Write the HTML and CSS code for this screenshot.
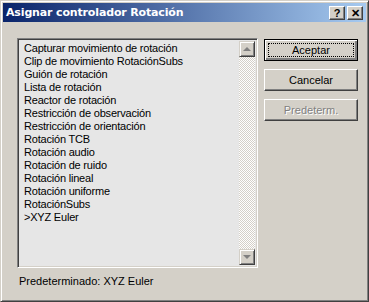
FILE: index.html
```html
<!DOCTYPE html>
<html lang="es">
<head>
  <meta charset="UTF-8" />
  <title>Asignar controlador Rotación</title>
  <link rel="stylesheet" href="styles.css">
</head>
<body>
  <div class="window">
    <div class="titlebar">
      <span class="title">Asignar controlador Rotación</span>
      <span class="tbtn">?</span>
      <span class="tbtn close">✕</span>
    </div>

    <div class="content">
      <div class="listbox">
        <ul class="items">
          <li>Capturar movimiento de rotación</li>
          <li>Clip de movimiento RotaciónSubs</li>
          <li>Guión de rotación</li>
          <li>Lista de rotación</li>
          <li>Reactor de rotación</li>
          <li>Restricción de observación</li>
          <li>Restricción de orientación</li>
          <li>Rotación TCB</li>
          <li>Rotación audio</li>
          <li>Rotación de ruido</li>
          <li>Rotación lineal</li>
          <li>Rotación uniforme</li>
          <li>RotaciónSubs</li>
          <li>&gt;XYZ Euler</li>
        </ul>
        <div class="scrollbar">
          <div class="arrow up"><span></span></div>
          <div class="track"></div>
          <div class="arrow down"><span></span></div>
        </div>
      </div>

      <div class="buttons">
        <button class="btn default"><span>Aceptar</span></button>
        <button class="btn">Cancelar</button>
        <button class="btn disabled">Predeterm.</button>
      </div>
    </div>

    <div class="footer">Predeterminado: XYZ Euler</div>
  </div>
</body>
</html>
```

FILE: styles.css
```css
body {
  margin: 0;
  background: #404040;
  font-family: 'Liberation Sans', Arial, sans-serif;
  font-size: 11px;
  color: #000;
}

.window {
  width: 369px;
  height: 302px;
  box-sizing: border-box;
  background: #d4d0c8;
  border: 1px solid;
  border-color: #d4d0c8 #404040 #404040 #d4d0c8;
  box-shadow: inset 1px 1px 0 #fff, inset -1px -1px 0 #808080;
  padding: 2px;
  display: flex;
  flex-direction: column;
}

.titlebar {
  height: 19px;
  display: flex;
  align-items: center;
  gap: 2px;
  padding: 0 3px 0 3px;
  background: linear-gradient(to right, #0a246a, #a6caf0);
  color: #fff;
}

.title {
  flex: 1;
  font-family: 'DejaVu Sans', Tahoma, sans-serif;
  font-weight: bold;
  font-size: 11px;
  letter-spacing: -0.15px;
}

.tbtn {
  width: 16px;
  height: 14px;
  box-sizing: border-box;
  background: #d4d0c8;
  color: #000;
  font-weight: bold;
  font-size: 11px;
  line-height: 12px;
  text-align: center;
  border: 1px solid;
  border-color: #fff #404040 #404040 #fff;
  box-shadow: inset -1px -1px 0 #808080;
}

.content {
  display: flex;
  gap: 6px;
  padding: 16px 0 0 14px;
}

.listbox {
  width: 241px;
  height: 230px;
  box-sizing: border-box;
  border: 1px solid;
  border-color: #808080 #fff #fff #808080;
  box-shadow: inset 1px 1px 0 #404040, inset -1px -1px 0 #d4d0c8;
  background: #e6e6e6;
  display: flex;
  padding: 2px;
}

.items {
  flex: 1;
  list-style: none;
  margin: 0;
  padding: 1px 0 0 4px;
  letter-spacing: -0.2px;
}

.items li {
  height: 13px;
  line-height: 13px;
  white-space: nowrap;
}

.scrollbar {
  width: 16px;
  display: flex;
  flex-direction: column;
}

.track {
  flex: 1;
  background: repeating-conic-gradient(#fff 0 25%, #d4d0c8 0 50%) 0 0 / 2px 2px;
}

.arrow {
  height: 16px;
  box-sizing: border-box;
  background: #d4d0c8;
  border: 1px solid;
  border-color: #d4d0c8 #404040 #404040 #d4d0c8;
  box-shadow: inset 1px 1px 0 #fff, inset -1px -1px 0 #808080;
  display: flex;
  align-items: center;
  justify-content: center;
}

.arrow span {
  width: 0;
  height: 0;
  border-left: 4px solid transparent;
  border-right: 4px solid transparent;
}

.up span {
  border-bottom: 4px solid #808080;
}

.down span {
  border-top: 4px solid #808080;
}

.buttons {
  width: 94px;
  display: flex;
  flex-direction: column;
  gap: 8px;
  padding-top: 1px;
}

.btn {
  height: 22px;
  box-sizing: border-box;
  background: #d4d0c8;
  font-family: 'Liberation Sans', Arial, sans-serif;
  font-size: 11px;
  color: #000;
  border: 1px solid;
  border-color: #fff #404040 #404040 #fff;
  box-shadow: inset -1px -1px 0 #808080;
  padding: 0;
}

.btn.default {
  border: 1px solid #000;
  box-shadow: inset 1px 1px 0 #fff, inset -2px -2px 0 #808080;
  padding: 3px;
}

.btn.default span {
  display: block;
  height: 100%;
  box-sizing: border-box;
  border: 1px dotted #000;
  line-height: 12px;
}

.btn.disabled {
  color: #808080;
  text-shadow: 1px 1px 0 #fff;
}

.footer {
  padding: 7px 0 0 16px;
}
```
